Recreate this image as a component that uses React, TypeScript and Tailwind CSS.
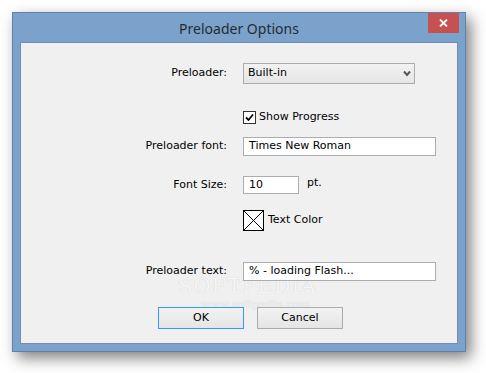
const ui = "font-['DejaVu_Sans',Tahoma,sans-serif] text-[11px] text-black";

function Row({ label, className, children }: { label?: string; className: string; children: React.ReactNode }) {
  return (
    <div className={`flex items-center ${className}`}>
      <div className="w-[207px] shrink-0 pr-[1px] text-right">{label}</div>
      <div className="ml-[15px] flex items-center">{children}</div>
    </div>
  );
}

function TextBox({ value, w }: { value: string; w: string }) {
  return (
    <div className={`flex h-full items-center border border-[#abadb3] bg-white pl-[5px] ${w}`}>
      {value}
    </div>
  );
}

export default function App() {
  return (
    <div className="h-[373px] w-[486px] overflow-hidden bg-white pl-[12px] pt-[12px]">
      <div className="flex h-[340px] w-[454px] flex-col border border-[#5f82aa] bg-[#7ba2ca] shadow-[5px_6px_14px_rgba(0,0,0,0.5)]">
        {/* title bar */}
        <div className="relative flex h-[29px] shrink-0 items-center justify-center">
          <span className="mt-[1px] font-['Noto_Sans',sans-serif] text-[14px] text-[#262b33]">Preloader Options</span>
          <div className="absolute right-[6px] top-0 flex h-[20px] w-[31px] items-center justify-center bg-[#c75050]">
            <svg width="9" height="8" viewBox="0 0 9 8">
              <path d="M1 0.5 L8 7.5 M8 0.5 L1 7.5" stroke="#fff" strokeWidth="1.8" />
            </svg>
          </div>
        </div>

        {/* client area */}
        <div className={`relative mx-[7px] mb-[7px] flex flex-1 flex-col border border-[#6d8fb6] bg-[#f0f0f0] pt-[20px] ${ui}`}>
          {/* watermark, drawn behind the controls */}
          <div className="pointer-events-none absolute left-[157px] top-[228px] font-['DejaVu_Serif',serif] text-[21px] tracking-[1px] text-[#f6f6f6] [text-shadow:0_0_1px_#c8c8c8]">
            SOFTPEDIA
          </div>
          <div className="pointer-events-none absolute left-[180px] top-[254px] font-['DejaVu_Serif',serif] text-[11px] text-[#f4f4f4] [text-shadow:0_0_1px_#c0c0c0]">
            www.softpedia.com
          </div>

          <Row label="Preloader:" className="relative h-[21px]">
            <div className="flex h-[21px] w-[172px] items-center justify-between border border-[#acacac] bg-[linear-gradient(#f2f2f2,#e5e5e5)] pl-[4px] pr-[3px]">
              <span>Built-in</span>
              <svg width="8" height="7" viewBox="0 0 8 7">
                <path d="M1 1.5 L4 5 L7 1.5" stroke="#555" strokeWidth="2" fill="none" />
              </svg>
            </div>
          </Row>

          <Row className="relative mt-[24px] h-[18px]">
            <div className="flex h-[13px] w-[13px] items-center justify-center border border-[#333] bg-white">
              <svg width="9" height="9" viewBox="0 0 9 9">
                <path d="M1 4.5 L3.5 7 L8 1.5" stroke="#000" strokeWidth="1.8" fill="none" />
              </svg>
            </div>
            <span className="ml-[3px]">Show Progress</span>
          </Row>

          <Row label="Preloader font:" className="relative mt-[10px] h-[21px]">
            <TextBox value="Times New Roman" w="w-[193px]" />
          </Row>

          <Row label="Font Size:" className="relative mt-[18px] h-[20px]">
            <TextBox value="10" w="w-[56px]" />
            <span className="ml-[8px] -mt-[4px]">pt.</span>
          </Row>

          <Row className="relative mt-[15px] h-[21px]">
            <svg width="21" height="21" viewBox="0 0 21 21">
              <rect x="0.5" y="0.5" width="20" height="20" fill="#fff" stroke="#000" />
              <path d="M1 1 L20 20 M20 1 L1 20" stroke="#000" strokeWidth="1" />
            </svg>
            <span className="ml-[4px]">Text Color</span>
          </Row>

          <Row label="Preloader text:" className="relative mt-[30px] h-[21px]">
            <TextBox value="% - loading Flash..." w="w-[193px]" />
          </Row>

          <div className="relative mt-[25px] flex h-[22px] gap-[13px] pl-[137px]">
            <button className="h-full w-[86px] border border-[#3399ff] bg-[linear-gradient(#f2f2f2,#e5e5e5)]">OK</button>
            <button className="h-full w-[86px] border border-[#acacac] bg-[linear-gradient(#f2f2f2,#e5e5e5)]">Cancel</button>
          </div>
        </div>
      </div>
    </div>
  );
}
